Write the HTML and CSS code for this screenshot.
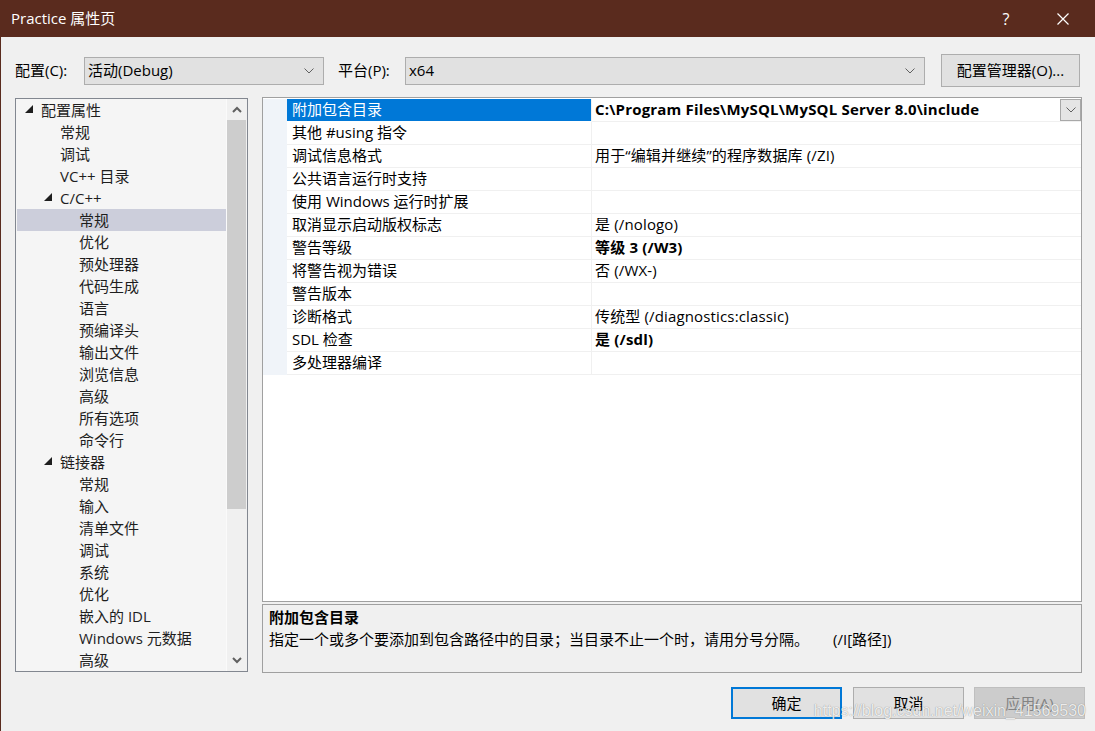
FILE: index.html
```html
<!DOCTYPE html>
<html lang="zh-CN">
<head>
<meta charset="utf-8">
<title>Practice 属性页</title>
<link rel="stylesheet" href="styles.css">
</head>
<body>
<div class="window">
  <div class="titlebar">
    <span class="title">Practice 属性页</span>
    <span class="tb-spacer"></span>
    <span class="tb-btn tb-help">?</span>
    <span class="tb-btn tb-close"><svg width="12" height="12" viewBox="0 0 12 12"><path d="M0.5 0.5 L11.5 11.5 M11.5 0.5 L0.5 11.5" stroke="#fff" stroke-width="1.2" fill="none"/></svg></span>
  </div>

  <div class="toprow">
    <span class="lbl lbl-config">配置(C):</span>
    <div class="combo combo-config"><span class="combo-text">活动(Debug)</span><span class="chev"><svg width="10" height="6" viewBox="0 0 10 6"><path d="M0.5 0.5 L5 5 L9.5 0.5" stroke="#606060" stroke-width="1" fill="none"/></svg></span></div>
    <span class="lbl lbl-platform">平台(P):</span>
    <div class="combo combo-platform"><span class="combo-text">x64</span><span class="chev"><svg width="10" height="6" viewBox="0 0 10 6"><path d="M0.5 0.5 L5 5 L9.5 0.5" stroke="#606060" stroke-width="1" fill="none"/></svg></span></div>
    <span class="btn btn-mgr">配置管理器(O)...</span>
  </div>

  <div class="main">
    <div class="tree">
      <div class="tree-items">
        <div class="ti l0"><span class="exp"><svg width="8" height="8" viewBox="0 0 8 8"><polygon points="0,8 8,8 8,0" fill="#1e1e1e"/></svg></span>配置属性</div>
        <div class="ti l1"><span class="exp"></span>常规</div>
        <div class="ti l1"><span class="exp"></span>调试</div>
        <div class="ti l1"><span class="exp"></span>VC++ 目录</div>
        <div class="ti l1"><span class="exp"><svg width="8" height="8" viewBox="0 0 8 8"><polygon points="0,8 8,8 8,0" fill="#1e1e1e"/></svg></span>C/C++</div>
        <div class="ti l2 sel"><span class="exp"></span>常规</div>
        <div class="ti l2"><span class="exp"></span>优化</div>
        <div class="ti l2"><span class="exp"></span>预处理器</div>
        <div class="ti l2"><span class="exp"></span>代码生成</div>
        <div class="ti l2"><span class="exp"></span>语言</div>
        <div class="ti l2"><span class="exp"></span>预编译头</div>
        <div class="ti l2"><span class="exp"></span>输出文件</div>
        <div class="ti l2"><span class="exp"></span>浏览信息</div>
        <div class="ti l2"><span class="exp"></span>高级</div>
        <div class="ti l2"><span class="exp"></span>所有选项</div>
        <div class="ti l2"><span class="exp"></span>命令行</div>
        <div class="ti l1"><span class="exp"><svg width="8" height="8" viewBox="0 0 8 8"><polygon points="0,8 8,8 8,0" fill="#1e1e1e"/></svg></span>链接器</div>
        <div class="ti l2"><span class="exp"></span>常规</div>
        <div class="ti l2"><span class="exp"></span>输入</div>
        <div class="ti l2"><span class="exp"></span>清单文件</div>
        <div class="ti l2"><span class="exp"></span>调试</div>
        <div class="ti l2"><span class="exp"></span>系统</div>
        <div class="ti l2"><span class="exp"></span>优化</div>
        <div class="ti l2"><span class="exp"></span>嵌入的 IDL</div>
        <div class="ti l2"><span class="exp"></span>Windows 元数据</div>
        <div class="ti l2"><span class="exp"></span>高级</div>
      </div>
      <div class="scrollbar">
        <div class="sb-btn"><svg width="10" height="7" viewBox="0 0 10 7"><path d="M1 6 L5 2 L9 6" stroke="#606060" stroke-width="2" fill="none"/></svg></div>
        <div class="sb-thumb"></div>
        <div class="sb-track"></div>
        <div class="sb-btn"><svg width="10" height="7" viewBox="0 0 10 7"><path d="M1 1 L5 5 L9 1" stroke="#606060" stroke-width="2" fill="none"/></svg></div>
      </div>
    </div>

    <div class="right">
      <div class="grid">
        <div class="row">
          <div class="gm"></div>
          <div class="gn selname">附加包含目录</div>
          <div class="gv bold"><span class="gv-text">C:\Program Files\MySQL\MySQL Server 8.0\include</span><span class="gv-drop"><svg width="10" height="6" viewBox="0 0 10 6"><path d="M0.5 0.5 L5 5 L9.5 0.5" stroke="#606060" stroke-width="1" fill="none"/></svg></span></div>
        </div>
        <div class="row"><div class="gm"></div><div class="gn">其他 #using 指令</div><div class="gv"></div></div>
        <div class="row"><div class="gm"></div><div class="gn">调试信息格式</div><div class="gv">用于“编辑并继续”的程序数据库 (/ZI)</div></div>
        <div class="row"><div class="gm"></div><div class="gn">公共语言运行时支持</div><div class="gv"></div></div>
        <div class="row"><div class="gm"></div><div class="gn">使用 Windows 运行时扩展</div><div class="gv"></div></div>
        <div class="row"><div class="gm"></div><div class="gn">取消显示启动版权标志</div><div class="gv">是 (/nologo)</div></div>
        <div class="row"><div class="gm"></div><div class="gn">警告等级</div><div class="gv bold">等级 3 (/W3)</div></div>
        <div class="row"><div class="gm"></div><div class="gn">将警告视为错误</div><div class="gv">否 (/WX-)</div></div>
        <div class="row"><div class="gm"></div><div class="gn">警告版本</div><div class="gv"></div></div>
        <div class="row"><div class="gm"></div><div class="gn">诊断格式</div><div class="gv">传统型 (/diagnostics:classic)</div></div>
        <div class="row"><div class="gm"></div><div class="gn">SDL 检查</div><div class="gv bold">是 (/sdl)</div></div>
        <div class="row"><div class="gm"></div><div class="gn">多处理器编译</div><div class="gv"></div></div>
      </div>
      <div class="desc">
        <div class="desc-title">附加包含目录</div>
        <div class="desc-text"><span>指定一个或多个要添加到包含路径中的目录；当目录不止一个时，请用分号分隔。</span><span class="desc-switch">(/I[路径])</span></div>
      </div>
    </div>
  </div>

  <div class="footer">
    <span class="btn fbtn btn-ok">确定</span>
    <span class="btn fbtn btn-cancel">取消</span>
    <span class="btn fbtn btn-apply">应用(A)</span>
    <span class="watermark">https://blog.csdn.net/weixin_41569530</span>
  </div>
</div>
</body>
</html>
```

FILE: styles.css
```css
* { box-sizing: border-box; }
html, body { margin: 0; padding: 0; }
body {
  width: 1095px;
  height: 731px;
  overflow: hidden;
  background: #f0f0f0;
  font-family: "Open Sans", "Noto Sans CJK SC", sans-serif;
  font-size: 15px;
  color: #000;
}
.window {
  width: 1095px;
  height: 731px;
  display: flex;
  flex-direction: column;
  border-left: 1px solid #5a2b1e;
  background: #f0f0f0;
}

/* title bar */
.titlebar {
  height: 37px;
  flex: none;
  background: #5a2b1e;
  color: #fff;
  display: flex;
  align-items: center;
  padding-left: 10px;
  padding-right: 9px;
}
.title { font-size: 15px; line-height: 20px; padding-bottom: 1px; }
.tb-spacer { flex: 1; }
.tb-btn {
  width: 46px;
  height: 37px;
  display: flex;
  align-items: center;
  justify-content: center;
}
.tb-help { font-size: 16px; margin-right: 11px; }

/* top row */
.toprow {
  flex: none;
  height: 33px;
  margin-top: 17px;
  display: flex;
  align-items: center;
  padding-left: 14px;
}
.lbl { line-height: 20px; white-space: nowrap; padding-bottom: 2px; }
.lbl-config { width: 69px; }
.lbl-platform { width: 81px; padding-left: 14px; }
.combo {
  height: 28px;
  border: 1px solid #adadad;
  background: #e1e1e1;
  display: flex;
  align-items: center;
  padding-left: 3px;
}
.combo-text { flex: 1; line-height: 20px; padding-bottom: 2px; }
.chev { width: 24px; display: flex; justify-content: center; padding-right: 4px; }
.combo-config { width: 240px; }
.combo-platform { width: 520px; }
.btn {
  display: flex;
  align-items: center;
  justify-content: center;
  border: 1px solid #adadad;
  background: #e1e1e1;
  white-space: nowrap;
  padding-bottom: 2px;
}
.btn-mgr { width: 139px; height: 33px; margin-left: 16px; }

/* main */
.main {
  flex: none;
  height: 576px;
  margin-top: 10px;
  display: flex;
  padding-left: 14px;
}
.tree {
  width: 233px;
  height: 574px;
  margin-top: 1px;
  border: 1px solid #828790;
  background: #f5f5f5;
  display: flex;
}
.tree-items { width: 210px; padding-left: 1px; }
.ti {
  height: 22px;
  line-height: 20px;
  display: flex;
  align-items: center;
  white-space: nowrap;
  color: #1e1e1e;
  padding-bottom: 1px;
}
.ti.l0 { padding-left: 8px; }
.ti.l1 { padding-left: 27px; }
.ti.l2 { padding-left: 46px; }
.ti.sel { background: #cccedb; }
.exp { width: 16px; flex: none; display: flex; align-items: center; padding-bottom: 1px; }
.scrollbar {
  width: 21px;
  display: flex;
  flex-direction: column;
  background: #f0f0f0;
  border-left: 1px solid #fafafa;
}
.sb-btn { height: 21px; display: flex; align-items: center; justify-content: center; }
.sb-thumb { height: 389px; background: #cdcdcd; margin-right: 1px; }
.sb-track { flex: 1; }

.right {
  width: 820px;
  margin-left: 14px;
  display: flex;
  flex-direction: column;
}
.grid {
  height: 505px;
  border: 1px solid #a0a0a0;
  background: #fff;
  padding-top: 1px;
}
.row { display: flex; height: 23px; }
.gm { width: 24px; background: #f0f4f9; flex: none; }
.gn {
  width: 305px;
  flex: none;
  padding-left: 5px;
  line-height: 21px;
  border-bottom: 1px solid #f0f0f0;
  border-right: 1px solid #f0f0f0;
  white-space: nowrap;
}
.gn.selname { background: #0078d7; color: #fff; border-bottom-color: #fff; }
.gv {
  flex: 1;
  padding-left: 3px;
  line-height: 21px;
  border-bottom: 1px solid #f0f0f0;
  white-space: nowrap;
  display: flex;
  letter-spacing: 0.15px;
}
.gv.bold { font-weight: 700; letter-spacing: 0.18px; }
.gv-text { flex: 1; }
.gv-drop {
  width: 21px;
  height: 22px;
  border: 1px solid #a8a8a8;
  background: #e5e5e5;
  display: flex;
  align-items: center;
  justify-content: center;
}
.desc {
  height: 69px;
  margin-top: 2px;
  border: 1px solid #a0a0a0;
  background: #f0f0f0;
  padding: 1px 6px 0;
}
.desc-title { font-weight: 700; line-height: 22px; }
.desc-text { line-height: 22px; display: flex; white-space: nowrap; }
.desc-switch { margin-left: 24px; }

/* footer */
.footer {
  flex: none;
  position: relative;
  margin-top: 14px;
  height: 32px;
  display: flex;
  justify-content: flex-end;
  padding-right: 10px;
}
.fbtn { width: 111px; height: 32px; margin-left: 11px; }
.btn-ok { border: 2px solid #0078d7; }
.btn-apply { background: #cccccc; border-color: #bfbfbf; color: #838383; margin-left: 10px; }
.watermark {
  position: absolute;
  right: 9px;
  top: 15px;
  font-family: "Liberation Sans", sans-serif;
  font-size: 16px;
  line-height: 18px;
  color: rgba(255, 255, 255, 0.85);
  text-shadow: 0 0 1px rgba(0, 0, 0, 0.45);
  white-space: nowrap;
}
```
